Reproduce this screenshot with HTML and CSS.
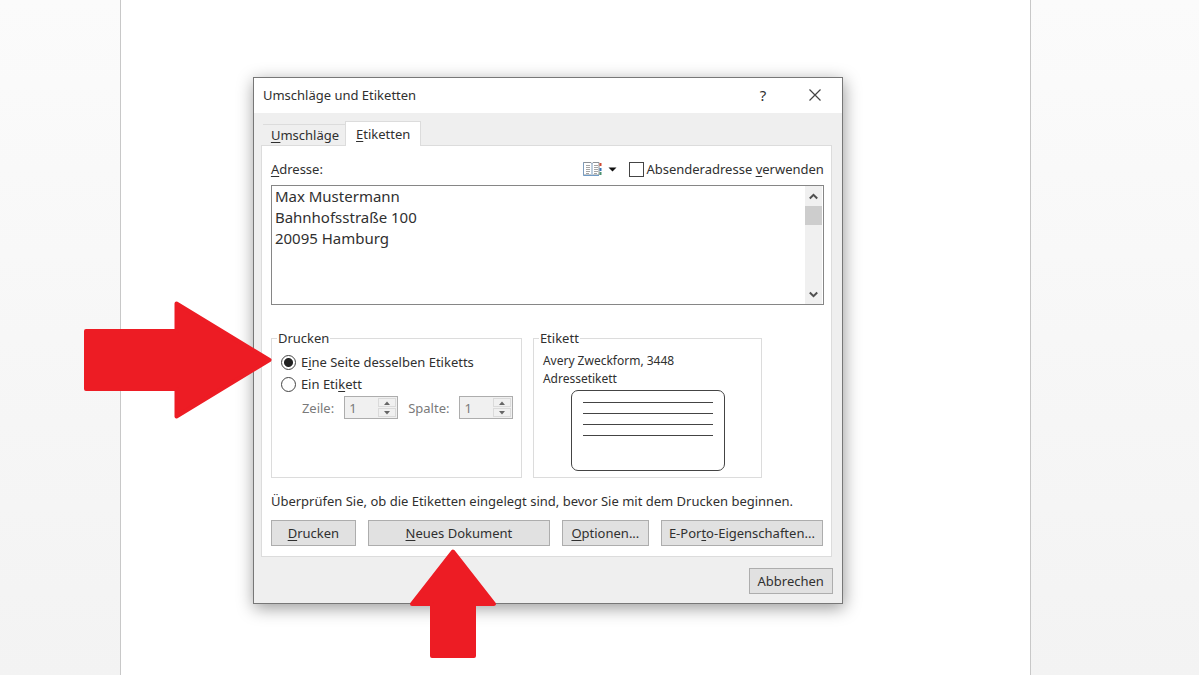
FILE: index.html
```html
<!DOCTYPE html>
<html lang="de">
<head>
<meta charset="utf-8">
<meta name="viewport" content="width=device-width, initial-scale=1">
<title>Umschläge und Etiketten</title>
<link rel="stylesheet" href="styles.css">
</head>
<body>
<main class="workspace">
  <div class="sheet">
    <section class="dialog" role="dialog" aria-labelledby="dialog-title">
      <header class="titlebar">
        <h1 class="title" id="dialog-title">Umschläge und Etiketten</h1>
        <button class="title-button help" type="button" aria-label="Hilfe">?</button>
        <button class="title-button" type="button" aria-label="Schließen">
          <svg width="12" height="12" viewBox="0 0 12 12"><path d="M.5 .5 11.5 11.5M11.5 .5 .5 11.5" fill="none" stroke="#444" stroke-width="1.2"/></svg>
        </button>
      </header>

      <div class="content">
        <div class="tabs" role="tablist">
          <button class="tab" type="button" role="tab" aria-selected="false"><u>U</u>mschläge</button>
          <button class="tab active" type="button" role="tab" aria-selected="true"><u>E</u>tiketten</button>
        </div>

        <div class="panel" role="tabpanel">
          <div class="address-head">
            <label class="address-label" for="address"><u>A</u>dresse:</label>
            <button class="book" type="button" aria-label="Adressbuch">
              <svg width="35" height="16" viewBox="0 0 35 16">
                <path d="M.5 1.5h7.5l1 1 1-1h6v12.500h-6l-1 1-1-1H.5z" fill="#fff" stroke="#8b9096"/>
                <path d="M.5 14.500h15.500" stroke="#6d9bc8" fill="none"/>
                <path d="M.5 1.500v13M9 2v13" stroke="#7d9cbd" fill="none"/>
                <path d="M3 4.500h4M3 6.500h4M3 8.500h4M3 10.500h4M3 12.500h3M11 4.500h4M11 6.500h4M11 8.500h4M11 10.500h4M11 12.500h3" stroke="#a5a5a5" fill="none"/>
                <path d="M16.500 2h2v3h-2z" fill="#cf4b32"/>
                <path d="M16.500 7h2v3h-2z" fill="#3774b5"/>
                <path d="M16.500 11h2v3h-2z" fill="#4c9271"/>
                <path d="M25.500 6.500h8l-4 4z" fill="#111"/>
              </svg>
            </button>
            <label class="choice"><input class="check" type="checkbox"><span>Absenderadresse <u>v</u>erwenden</span></label>
          </div>

          <div class="address-box">
            <textarea class="address" id="address" spellcheck="false">Max Mustermann
Bahnhofsstraße 100
20095 Hamburg</textarea>
            <div class="scrollbar">
              <button class="scroll-button" type="button" aria-label="Nach oben"><svg width="9" height="7" viewBox="0 0 9 7"><path d="M.8 5.500 4.500 1.800 8.200 5.500" fill="none" stroke="#505050" stroke-width="2"/></svg></button>
              <div class="thumb"></div>
              <button class="scroll-button" type="button" aria-label="Nach unten"><svg width="9" height="7" viewBox="0 0 9 7"><path d="M.8 1.500 4.500 5.200 8.200 1.500" fill="none" stroke="#505050" stroke-width="2"/></svg></button>
            </div>
          </div>

          <div class="groups">
            <fieldset class="group print">
              <legend>Drucken</legend>
              <label class="choice"><input class="radio" type="radio" name="scope" checked><span>E<u>i</u>ne Seite desselben Etiketts</span></label>
              <label class="choice"><input class="radio" type="radio" name="scope"><span>Ein Eti<u>k</u>ett</span></label>
              <div class="position">
                <label for="row">Zeile:</label>
                <div class="spinner">
                  <input class="number" id="row" type="text" value="1" disabled>
                  <div class="steps">
                    <button class="step" type="button" aria-label="Zeile erhöhen" disabled><svg width="6" height="4" viewBox="0 0 6 4"><path d="M0 4h6L3 .5z" fill="#666"/></svg></button>
                    <button class="step" type="button" aria-label="Zeile verringern" disabled><svg width="6" height="4" viewBox="0 0 6 4"><path d="M0 0h6L3 3.500z" fill="#666"/></svg></button>
                  </div>
                </div>
                <label for="column">Spalte:</label>
                <div class="spinner">
                  <input class="number" id="column" type="text" value="1" disabled>
                  <div class="steps">
                    <button class="step" type="button" aria-label="Spalte erhöhen" disabled><svg width="6" height="4" viewBox="0 0 6 4"><path d="M0 4h6L3 .5z" fill="#666"/></svg></button>
                    <button class="step" type="button" aria-label="Spalte verringern" disabled><svg width="6" height="4" viewBox="0 0 6 4"><path d="M0 0h6L3 3.500z" fill="#666"/></svg></button>
                  </div>
                </div>
              </div>
            </fieldset>

            <fieldset class="group label-group">
              <legend>Etikett</legend>
              <p class="product">Avery Zweckform, 3448<br>Adressetikett</p>
              <div class="preview">
                <div class="line"></div>
                <div class="line"></div>
                <div class="line"></div>
                <div class="line"></div>
              </div>
            </fieldset>
          </div>

          <p class="note">Überprüfen Sie, ob die Etiketten eingelegt sind, bevor Sie mit dem Drucken beginnen.</p>

          <div class="actions">
            <button class="button" type="button"><u>D</u>rucken</button>
            <button class="button" type="button"><u>N</u>eues Dokument</button>
            <button class="button" type="button"><u>O</u>ptionen...</button>
            <button class="button" type="button">E-Por<u>t</u>o-Eigenschaften...</button>
          </div>
        </div>

        <footer class="footer">
          <button class="button" type="button">Abbrechen</button>
        </footer>
      </div>

      <svg class="arrow arrow-right" width="190" height="120" viewBox="0 0 190 120" aria-hidden="true"><path d="M3 31H93.500V3.500L186.500 60 93.500 116.500V89H3z" fill="#ed1c24" stroke="#ed1c24" stroke-width="4" stroke-linejoin="round"/></svg>
      <svg class="arrow arrow-up" width="88" height="112" viewBox="0 0 88 112" aria-hidden="true"><path d="M44 3.500 85 56H65V108H23V56H3z" fill="#ed1c24" stroke="#ed1c24" stroke-width="4" stroke-linejoin="round"/></svg>
    </section>
  </div>
</main>
</body>
</html>
```
FILE: styles.css
```css
* {
  box-sizing: border-box;
}

body {
  margin: 0;
  color: #303030;
  font: 13px/18px "Noto Sans", "Open Sans", sans-serif;
}

button,
input,
textarea {
  margin: 0;
  padding: 0;
  border: 0;
  border-radius: 0;
  background: none;
  color: inherit;
  font: inherit;
}

p,
h1 {
  margin: 0;
  font: inherit;
}

svg {
  display: block;
}

u {
  text-underline-offset: 2px;
}

.workspace {
  display: flex;
  min-height: 100vh;
  padding: 0 14% 0 10%;
  background: linear-gradient(#fbfbfb, #f3f3f3);
}

.sheet {
  flex: 1;
  padding: 77px 16px 72px 132px;
  border: solid #c8c8c8;
  border-width: 0 1px;
  background: #fff;
}

.dialog {
  position: relative;
  max-width: 590px;
  border: 1px solid #777;
  background: #efefef;
  box-shadow: 1px 4px 16px rgba(0, 0, 0, 0.4);
}

.titlebar {
  display: flex;
  align-items: center;
  height: 35px;
  padding: 0 1px 2px 9px;
  background: #fff;
}

.title {
  flex: 1;
}

.title-button {
  display: grid;
  place-items: center;
  width: 52px;
  height: 32px;
}

.help {
  font-size: 15px;
}

.content {
  padding: 8px 10px 9px 7px;
}

.tabs {
  display: flex;
  align-items: flex-end;
  padding-left: 2px;
}

.tab {
  height: 21px;
  padding: 0 6px 0 8px;
  border-top: 1px solid #dcdcdc;
}

.tab.active {
  height: 25px;
  margin-bottom: -1px;
  padding: 0 10px;
  border: 1px solid #dcdcdc;
  border-bottom: 0;
  background: #fff;
}

.panel {
  padding: 12px 7px 10px 9px;
  border: 1px solid #dcdcdc;
  background: #fff;
}

.address-head {
  display: flex;
  align-items: center;
  height: 22px;
  margin-bottom: 5px;
}

.address-label {
  flex: 1;
}

.book {
  margin-right: 11px;
}

.choice {
  display: flex;
  align-items: center;
  gap: 5px;
}

.check {
  appearance: none;
  width: 15px;
  height: 15px;
  border: 1px solid #444;
}

.address-head .choice {
  gap: 2px;
}

.address-box {
  display: flex;
  height: 120px;
  padding-right: 1px;
  border: 1px solid #868686;
}

.address {
  flex: 1;
  min-width: 0;
  padding: 0 3px;
  resize: none;
  outline: 0;
  font-size: 15px;
  line-height: 21px;
}

.scrollbar {
  display: flex;
  flex-direction: column;
  width: 17px;
  background: #f0f0f0;
}

.scroll-button {
  display: grid;
  place-items: center;
  height: 20px;
}

.thumb {
  height: 19px;
  margin-bottom: auto;
  background: #cdcdcd;
}

.groups {
  display: flex;
  gap: 11px;
  padding-top: 24px;
}

.group {
  min-width: 0;
  height: 149px;
  margin: 0;
  border: 1px solid #dcdcdc;
}

.group legend {
  height: 18px;
  margin-left: -4px;
  padding: 0 1px;
}

.print {
  width: 251px;
  padding: 4px 9px 0;
}

.print .choice {
  height: 22px;
}

.radio {
  appearance: none;
  width: 15px;
  height: 15px;
  border: 1px solid #444;
  border-radius: 50%;
}

.radio:checked {
  background: radial-gradient(circle, #222 4px, #fff 5px);
}

.position {
  display: flex;
  align-items: center;
  gap: 10px;
  padding: 1px 0 0 21px;
  color: #7a7a7a;
}

.spinner {
  display: flex;
  width: 54px;
  height: 23px;
  padding: 1px;
  border: 1px solid #adadad;
  background: #f0f0f0;
}

.number {
  flex: 1;
  min-width: 0;
  padding-left: 3px;
}

.steps {
  display: grid;
  gap: 1px;
  width: 18px;
}

.step {
  display: grid;
  place-items: center;
  border: 1px solid #dadada;
}

.label-group {
  width: 229px;
  padding: 5px 9px 0;
}

.product {
  font-size: 12px;
}

.preview {
  display: grid;
  align-content: start;
  gap: 10px;
  width: 154px;
  height: 81px;
  margin: 2px 0 0 28px;
  padding: 11px;
  border: 1px solid #444;
  border-radius: 7px;
}

.line {
  height: 1px;
  background: #444;
}

.note {
  margin-top: 14px;
}

.actions {
  display: grid;
  grid-template-columns: 85fr 182fr 87fr 162fr;
  gap: 12px;
  margin-top: 10px;
  padding-right: 1px;
}

.button {
  height: 26px;
  padding: 0 7px;
  border: 1px solid #adadad;
  background: #e1e1e1;
  white-space: nowrap;
}

.footer {
  display: flex;
  justify-content: flex-end;
  margin-right: -1px;
  padding-top: 11px;
}

.footer .button {
  padding: 0 8px;
}

.arrow {
  position: absolute;
  pointer-events: none;
}

.arrow-right {
  top: 222px;
  left: -171px;
}

.arrow-up {
  top: 470px;
  left: 155px;
}
```
